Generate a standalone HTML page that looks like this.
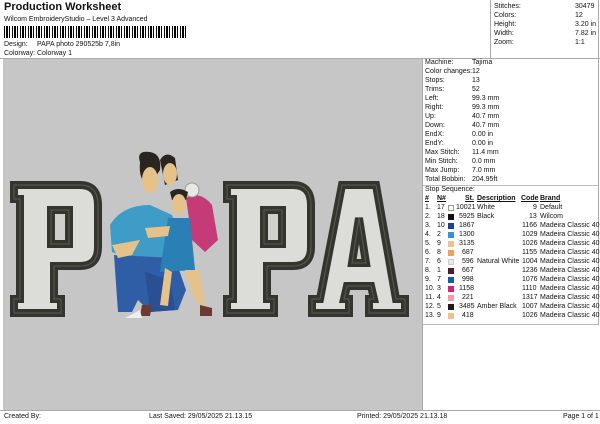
<!DOCTYPE html>
<html><head><style>
*{margin:0;padding:0;box-sizing:border-box}
body{width:600px;height:424px;background:#fff;font-family:"Liberation Sans",sans-serif;color:#111;position:relative;overflow:hidden;font-size:7px}
.a{position:absolute;white-space:nowrap}
.rp div{position:absolute;white-space:nowrap;font-size:7px;line-height:9px}
.rp span{position:absolute;width:6px;height:6px}
</style></head><body>
<div class="a" style="left:4px;top:1px;font-size:11px;font-weight:bold">Production Worksheet</div>
<div class="a" style="left:4px;top:16px;font-size:7px">Wilcom EmbroideryStudio – Level 3 Advanced</div>
<div class="a" style="left:4px;top:26px;width:182px;height:12px;background:repeating-linear-gradient(90deg,#000 0 1px,#fff 1px 2px,#000 2px 4px,#fff 4px 5px,#000 5px 6px,#fff 6px 8px)"></div>
<div class="a" style="left:4px;top:41px">Design:</div><div class="a" style="left:37px;top:41px">PAPA photo 290525b 7,8in</div>
<div class="a" style="left:4px;top:50px">Colorway:</div><div class="a" style="left:37px;top:50px">Colorway 1</div>
<div class="a" style="left:0;top:58px;width:600px;height:1px;background:#aaa"></div>
<div class="a" style="left:490px;top:0;width:1px;height:58px;background:#aaa"></div>
<div class="a" style="left:598px;top:0;width:1px;height:58px;background:#aaa"></div>
<div class="rp">
<div style="left:494px;top:2px">Stitches:</div><div style="left:575px;top:2px">30479</div>
<div style="left:494px;top:11px">Colors:</div><div style="left:575px;top:11px">12</div>
<div style="left:494px;top:20px">Height:</div><div style="left:575px;top:20px">3.20 in</div>
<div style="left:494px;top:29px">Width:</div><div style="left:575px;top:29px">7.82 in</div>
<div style="left:494px;top:38px">Zoom:</div><div style="left:575px;top:38px">1:1</div>
</div>
<svg class="a" style="left:0;top:59px" width="422" height="351" viewBox="0 59 422 351">
<rect x="3" y="59" width="419" height="351" fill="#c6c6c6"/>
<defs>
<path id="p1" d="M14,185 H80 Q98,185 98,205 V247 Q98,266 80,266 H54 V299 H61 V313 H14 V299 H20 V199 H14 Z"/>
<path id="c1" d="M51,210 H69 V244 H51 Z"/>
<path id="a1" d="M342,185 H376 L396,299 H405 V313 H369 V299 H374 L371,286 H347 L344,299 H349 V313 H312 V299 H320 Z"/>
<path id="ca" d="M352,263 H366 L359,218 Z"/>
</defs>
<g stroke-linejoin="miter">
<use href="#p1" fill="#dcddd8" stroke="#35352f" stroke-width="8"/>
<use href="#p1" fill="none" stroke="#5a5a52" stroke-width="1"/>
<use href="#c1" fill="#cfd0cb" stroke="#35352f" stroke-width="8"/>
<use href="#c1" fill="none" stroke="#5a5a52" stroke-width="1"/>
<g transform="translate(213,0)">
<use href="#p1" fill="#dcddd8" stroke="#35352f" stroke-width="8"/>
<use href="#p1" fill="none" stroke="#5a5a52" stroke-width="1"/>
<use href="#c1" fill="#cfd0cb" stroke="#35352f" stroke-width="8"/>
<use href="#c1" fill="none" stroke="#5a5a52" stroke-width="1"/>
</g>
<use href="#a1" fill="#dcddd8" stroke="#35352f" stroke-width="8"/>
<use href="#a1" fill="none" stroke="#5a5a52" stroke-width="1"/>
<use href="#ca" fill="#cfd0cb" stroke="#35352f" stroke-width="8"/>
<use href="#ca" fill="none" stroke="#5a5a52" stroke-width="1"/>
</g>
<path d="M110,225 Q122,205 150,205 L172,215 L180,235 L175,262 L150,266 L112,252 Z" fill="#3e9cc6"/>
<path d="M114,255 L175,258 L186,290 L178,310 L150,312 L138,300 L132,312 L118,312 Z" fill="#2f5ea6"/>
<path d="M145,272 L170,280 L175,310 L150,312 Z" fill="#2a4f92"/>
<path d="M140,162 Q136,150 150,152 Q162,154 160,170 L150,185 Q138,182 140,162 Z" fill="#2b2521"/>
<ellipse cx="150" cy="180" rx="8" ry="13" fill="#e4c28a"/>
<path d="M160,160 Q166,150 175,158 L178,180 L165,185 Z" fill="#2b2521"/>
<ellipse cx="170" cy="174" rx="7" ry="11" fill="#e4c28a"/>
<path d="M186,198 Q200,190 212,205 L218,240 L205,252 L192,240 Z" fill="#c53b77"/>
<circle cx="192" cy="190" r="7" fill="#e8e8e4" stroke="#999" stroke-width="1"/>
<path d="M170,192 Q178,186 188,192 L186,200 L172,200 Z" fill="#2b2521"/>
<ellipse cx="179" cy="204" rx="7" ry="10" fill="#e4c28a"/>
<path d="M168,218 L190,218 L195,270 L160,272 Z" fill="#2a7fb4"/>
<path d="M165,268 L160,305 L168,306 L172,272 Z M185,270 L195,300 L205,308 L200,270 Z" fill="#e4c28a"/>
<path d="M142,305 L152,305 L150,316 L140,316 Z M200,305 L212,308 L212,316 L200,316 Z" fill="#6b3a34"/>
<path d="M112,245 L140,240 L132,255 L118,258 Z M145,228 L170,226 L168,236 L148,238 Z" fill="#e4c28a"/>
<path d="M125,318 L140,310 L142,318 Z" fill="#eee"/>
</svg>
<div class="a" style="left:422px;top:59px;width:1px;height:351px;background:#aaa"></div>
<div class="a" style="left:423px;top:185px;width:175px;height:1px;background:#bbb"></div>
<div class="a" style="left:423px;top:324px;width:175px;height:1px;background:#bbb"></div>
<div class="a" style="left:598px;top:59px;width:1px;height:266px;background:#aaa"></div>
<div class="rp">
<div style="left:425px;top:58px">Machine:</div><div style="left:472px;top:58px">Tajima</div>
<div style="left:425px;top:67px">Color changes:</div><div style="left:472px;top:67px">12</div>
<div style="left:425px;top:76px">Stops:</div><div style="left:472px;top:76px">13</div>
<div style="left:425px;top:85px">Trims:</div><div style="left:472px;top:85px">52</div>
<div style="left:425px;top:94px">Left:</div><div style="left:472px;top:94px">99.3 mm</div>
<div style="left:425px;top:103px">Right:</div><div style="left:472px;top:103px">99.3 mm</div>
<div style="left:425px;top:112px">Up:</div><div style="left:472px;top:112px">40.7 mm</div>
<div style="left:425px;top:121px">Down:</div><div style="left:472px;top:121px">40.7 mm</div>
<div style="left:425px;top:130px">EndX:</div><div style="left:472px;top:130px">0.00 in</div>
<div style="left:425px;top:139px">EndY:</div><div style="left:472px;top:139px">0.00 in</div>
<div style="left:425px;top:148px">Max Stitch:</div><div style="left:472px;top:148px">11.4 mm</div>
<div style="left:425px;top:157px">Min Stitch:</div><div style="left:472px;top:157px">0.0 mm</div>
<div style="left:425px;top:166px">Max Jump:</div><div style="left:472px;top:166px">7.0 mm</div>
<div style="left:425px;top:175px">Total Bobbin:</div><div style="left:472px;top:175px">204.95ft</div>
<div style="left:425px;top:185px">Stop Sequence:</div>
<div style="left:425px;top:194px;font-weight:bold;text-decoration:underline">#</div>
<div style="left:437px;top:194px;font-weight:bold;text-decoration:underline">N#</div>
<div style="left:465px;top:194px;font-weight:bold;text-decoration:underline">St.</div>
<div style="left:477px;top:194px;font-weight:bold;text-decoration:underline">Description</div>
<div style="left:521px;top:194px;font-weight:bold;text-decoration:underline">Code</div>
<div style="left:540px;top:194px;font-weight:bold;text-decoration:underline">Brand</div>
<div style="left:425px;top:203px">1.</div><div style="left:437px;top:203px">17</div><span style="left:448px;top:205px;border:1px solid #999;background:#fff"></span><div style="left:456px;top:203px">10021</div><div style="left:477px;top:203px">White</div><div style="left:533px;top:203px">9</div><div style="left:540px;top:203px">Default</div>
<div style="left:425px;top:212px">2.</div><div style="left:437px;top:212px">18</div><span style="left:448px;top:214px;background:#111"></span><div style="left:459px;top:212px">5925</div><div style="left:477px;top:212px">Black</div><div style="left:529px;top:212px">13</div><div style="left:540px;top:212px">Wilcom</div>
<div style="left:425px;top:221px">3.</div><div style="left:437px;top:221px">10</div><span style="left:448px;top:223px;background:#1f3f8f"></span><div style="left:459px;top:221px">1867</div><div style="left:522px;top:221px">1166</div><div style="left:540px;top:221px">Madeira Classic 40</div>
<div style="left:425px;top:230px">4.</div><div style="left:437px;top:230px">2</div><span style="left:448px;top:232px;background:#3a8fd0"></span><div style="left:459px;top:230px">1300</div><div style="left:522px;top:230px">1029</div><div style="left:540px;top:230px">Madeira Classic 40</div>
<div style="left:425px;top:239px">5.</div><div style="left:437px;top:239px">9</div><span style="left:448px;top:241px;background:#f2c08a"></span><div style="left:459px;top:239px">3135</div><div style="left:522px;top:239px">1026</div><div style="left:540px;top:239px">Madeira Classic 40</div>
<div style="left:425px;top:248px">6.</div><div style="left:437px;top:248px">8</div><span style="left:448px;top:250px;background:#f0a060"></span><div style="left:462px;top:248px">687</div><div style="left:522px;top:248px">1155</div><div style="left:540px;top:248px">Madeira Classic 40</div>
<div style="left:425px;top:257px">7.</div><div style="left:437px;top:257px">6</div><span style="left:448px;top:259px;background:#e8e8ee;border:1px solid #ccc"></span><div style="left:462px;top:257px">596</div><div style="left:477px;top:257px">Natural White</div><div style="left:522px;top:257px">1004</div><div style="left:540px;top:257px">Madeira Classic 40</div>
<div style="left:425px;top:266px">8.</div><div style="left:437px;top:266px">1</div><span style="left:448px;top:268px;background:#4a2028"></span><div style="left:462px;top:266px">667</div><div style="left:522px;top:266px">1236</div><div style="left:540px;top:266px">Madeira Classic 40</div>
<div style="left:425px;top:275px">9.</div><div style="left:437px;top:275px">7</div><span style="left:448px;top:277px;background:#1a5aa8"></span><div style="left:462px;top:275px">998</div><div style="left:522px;top:275px">1076</div><div style="left:540px;top:275px">Madeira Classic 40</div>
<div style="left:425px;top:284px">10.</div><div style="left:437px;top:284px">3</div><span style="left:448px;top:286px;background:#c82a70"></span><div style="left:459px;top:284px">1158</div><div style="left:522px;top:284px">1110</div><div style="left:540px;top:284px">Madeira Classic 40</div>
<div style="left:425px;top:293px">11.</div><div style="left:437px;top:293px">4</div><span style="left:448px;top:295px;background:#f0a0a0"></span><div style="left:462px;top:293px">221</div><div style="left:522px;top:293px">1317</div><div style="left:540px;top:293px">Madeira Classic 40</div>
<div style="left:425px;top:302px">12.</div><div style="left:437px;top:302px">5</div><span style="left:448px;top:304px;background:#1a1a1a"></span><div style="left:459px;top:302px">3485</div><div style="left:477px;top:302px">Amber Black</div><div style="left:522px;top:302px">1007</div><div style="left:540px;top:302px">Madeira Classic 40</div>
<div style="left:425px;top:311px">13.</div><div style="left:437px;top:311px">9</div><span style="left:448px;top:313px;background:#f2c08a"></span><div style="left:462px;top:311px">418</div><div style="left:522px;top:311px">1026</div><div style="left:540px;top:311px">Madeira Classic 40</div>
</div>
<div class="a" style="left:0;top:410px;width:600px;height:1px;background:#aaa"></div>
<div class="a" style="left:4px;top:413px">Created By:</div>
<div class="a" style="left:149px;top:413px">Last Saved: 29/05/2025 21.13.15</div>
<div class="a" style="left:357px;top:413px">Printed: 29/05/2025 21.13.18</div>
<div class="a" style="left:563px;top:413px">Page 1 of 1</div>
</body></html>
